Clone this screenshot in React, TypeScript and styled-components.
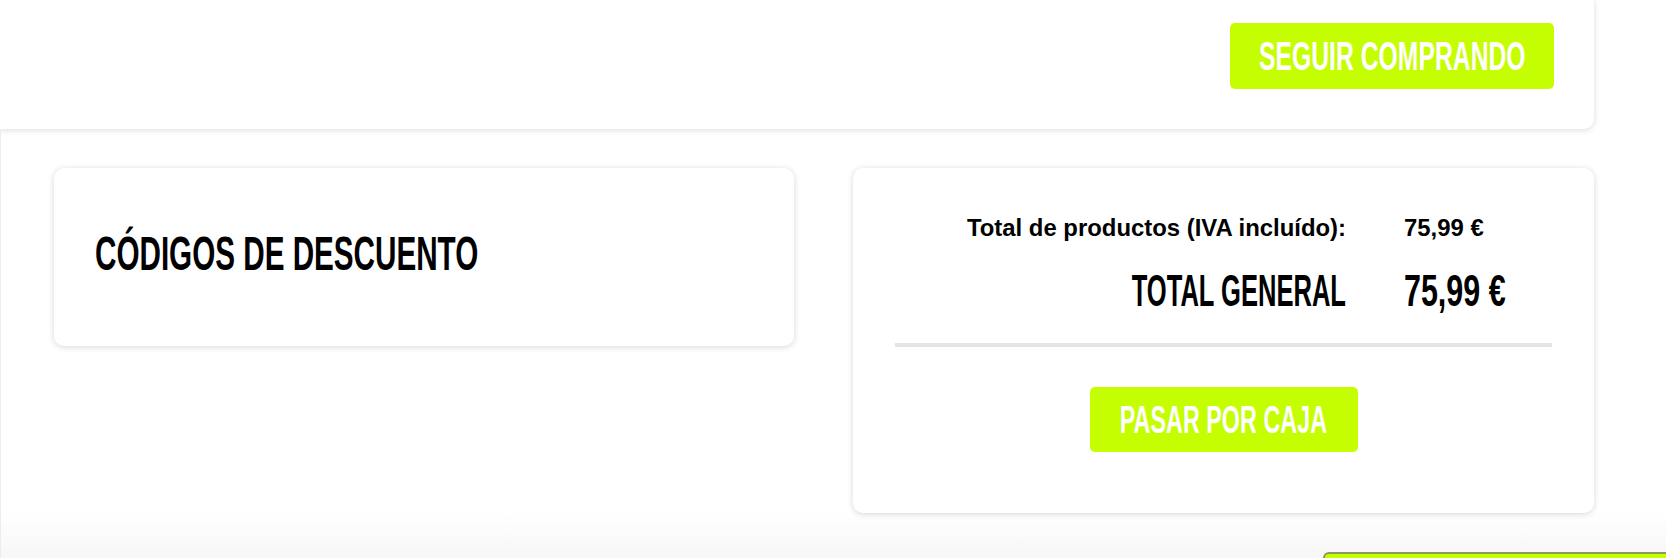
import styled, { createGlobalStyle } from 'styled-components';

const GlobalStyle = createGlobalStyle`
    html,
    body {
        margin: 0;
        padding: 0;
    }
    body {
        font-family: 'Liberation Sans', Arial, sans-serif;
        color: #000;
        overflow: hidden;
    }
`;

// No Oswald offline: bold Liberation Sans squeezed horizontally stands in for it
const Squeezed = styled.span<{ $scale?: number; $origin?: string }>`
    display: inline-block;
    font-weight: 700;
    white-space: nowrap;
    transform: scaleX(${(p) => p.$scale ?? 0.6});
    transform-origin: ${(p) => p.$origin ?? 'left'} center;
`;

const Page = styled.div`
    height: 100vh;
    background: linear-gradient(to bottom, #fff 0, #fff 510px, #f7f7f7 100%);
`;

const TopCard = styled.section`
    display: flex;
    justify-content: flex-end;
    box-sizing: border-box;
    width: 1594px;
    padding: 23px 40px 40px;
    background: #fff;
    border-radius: 0 0 10px 0;
    box-shadow: 0 1px 6px rgba(0, 0, 0, 0.15);
`;

const Lower = styled.div`
    display: grid;
    grid-template-columns: 740px 741px;
    column-gap: 59px;
    align-items: start;
    padding: 39px 0 0 53px;
    border-left: 1px solid #ececec;
    height: calc(100% - 129px);
    box-sizing: border-box;
`;

const Card = styled.div`
    background: #fff;
    border-radius: 10px;
    box-shadow: 0 1px 6px rgba(0, 0, 0, 0.16);
`;

const DiscountCard = styled(Card)`
    padding: 57px 41px 65px;
`;

const Heading = styled.h2`
    margin: 0;
    font-size: 49px;
    line-height: 56px;
    font-weight: 700;
`;

const SummaryCard = styled(Card)`
    padding: 46px 42px 61px;
`;

const Totals = styled.div`
    display: grid;
    grid-template-columns: 1fr 148px;
    column-gap: 58px;
    row-gap: 24px;
`;

const Cell = styled.div<{ $big?: boolean; $right?: boolean }>`
    font-weight: 700;
    font-size: ${(p) => (p.$big ? '43.5px' : '23.9px')};
    line-height: ${(p) => (p.$big ? '50px' : '28px')};
    text-align: ${(p) => (p.$right ? 'right' : 'left')};
    white-space: nowrap;
`;

const Divider = styled.hr`
    margin: 27px 0 0;
    height: 4px;
    border: 0;
    background: #e4e4e4;
`;

const ButtonRow = styled.div`
    display: flex;
    justify-content: center;
    margin-top: 40px;
`;

const LimeButton = styled.button<{ $width: number; $height: number; $font: number }>`
    display: flex;
    justify-content: center;
    align-items: center;
    width: ${(p) => p.$width}px;
    height: ${(p) => p.$height}px;
    padding: 0;
    border: 0;
    border-radius: 5px;
    background: #c4fe00;
    color: #fff;
    font-family: inherit;
    font-size: ${(p) => p.$font}px;
    line-height: ${(p) => p.$height}px;
    cursor: pointer;
`;

const FloatingBar = styled.div`
    position: fixed;
    left: 1323px;
    right: 0;
    top: 552px;
    bottom: 0;
    background: #c4fe00;
    border-top: 2px solid #8a9a62;
    border-left: 2px solid #8a9a62;
    border-radius: 8px 0 0 0;
`;

export default function App() {
    return (
        <Page>
            <GlobalStyle />
            <TopCard>
                <LimeButton $width={324} $height={66} $font={40.5}>
                    <Squeezed $scale={0.611} $origin="center">
                        SEGUIR COMPRANDO
                    </Squeezed>
                </LimeButton>
            </TopCard>
            <Lower>
                <DiscountCard>
                    <Heading>
                        <Squeezed $scale={0.605}>CÓDIGOS DE DESCUENTO</Squeezed>
                    </Heading>
                </DiscountCard>
                <SummaryCard>
                    <Totals>
                        <Cell $right>Total de productos (IVA incluído):</Cell>
                        <Cell>75,99 €</Cell>
                        <Cell $big $right>
                            <Squeezed $scale={0.587} $origin="right">
                                TOTAL GENERAL
                            </Squeezed>
                        </Cell>
                        <Cell $big>
                            <Squeezed $scale={0.7}>75,99 €</Squeezed>
                        </Cell>
                    </Totals>
                    <Divider />
                    <ButtonRow>
                        <LimeButton $width={268} $height={65} $font={39.1}>
                            <Squeezed $scale={0.598} $origin="center">
                                PASAR POR CAJA
                            </Squeezed>
                        </LimeButton>
                    </ButtonRow>
                </SummaryCard>
            </Lower>
            <FloatingBar />
        </Page>
    );
}
